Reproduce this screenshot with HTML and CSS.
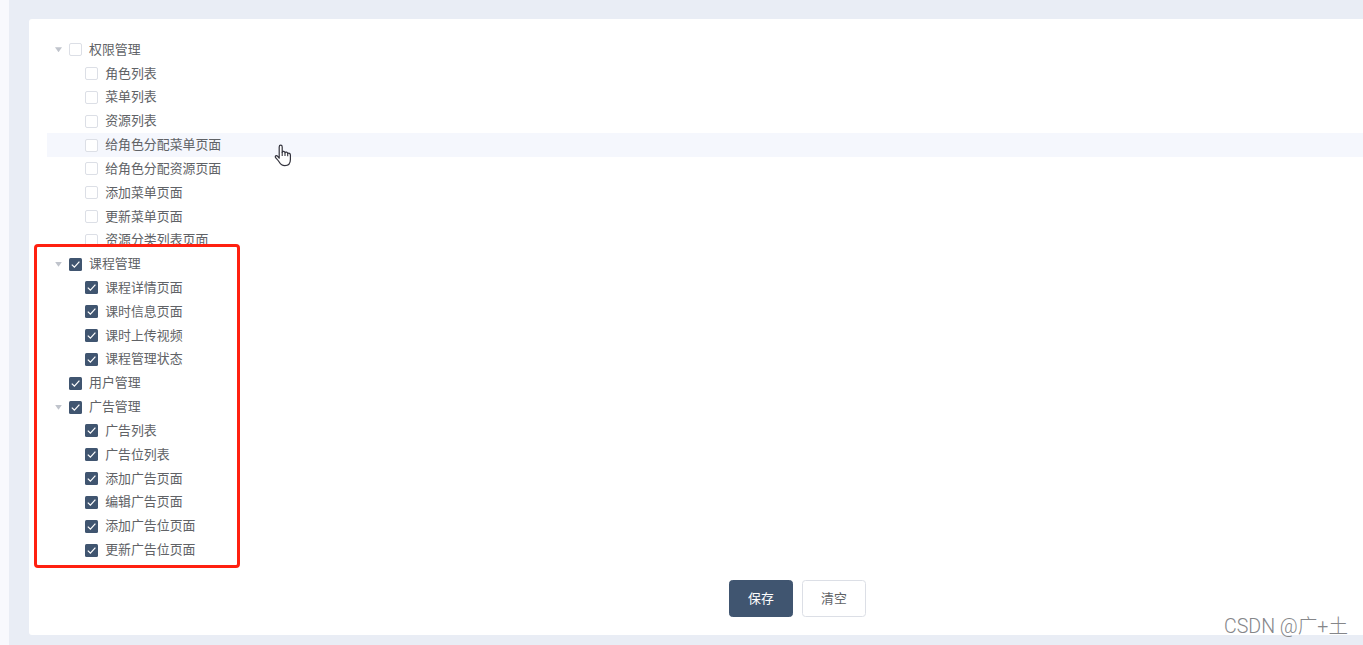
FILE: index.html
```
<!DOCTYPE html>
<html lang="zh-CN">
<head>
    <meta charset="UTF-8">
    <meta name="viewport" content="width=device-width, initial-scale=1.0">
    <title>分配菜单</title>
    <link rel="stylesheet" href="styles.css">
</head>
<body>
    <svg class="sprite">
        <symbol id="check" viewBox="0 0 13 13">
            <path d="M2.8 6.6 L5.4 9.2 L10.4 3.7" fill="none" stroke="#fff" stroke-width="1.2"/>
        </symbol>
    </svg>
    <aside class="sidebar"></aside>
    <main class="main">
        <section class="card">
            <ul class="tree">
                <li class="node"><i class="arrow"></i><span class="checkbox"></span><span class="label">权限管理</span></li>
                <li class="node child"><span class="checkbox"></span><span class="label">角色列表</span></li>
                <li class="node child"><span class="checkbox"></span><span class="label">菜单列表</span></li>
                <li class="node child"><span class="checkbox"></span><span class="label">资源列表</span></li>
                <li class="node child hover"><span class="checkbox"></span><span class="label">给角色分配菜单页面</span></li>
                <li class="node child"><span class="checkbox"></span><span class="label">给角色分配资源页面</span></li>
                <li class="node child"><span class="checkbox"></span><span class="label">添加菜单页面</span></li>
                <li class="node child"><span class="checkbox"></span><span class="label">更新菜单页面</span></li>
                <li class="node child"><span class="checkbox"></span><span class="label">资源分类列表页面</span></li>
                <li class="node"><i class="arrow"></i><span class="checkbox checked"><svg><use href="#check"/></svg></span><span class="label">课程管理</span></li>
                <li class="node child"><span class="checkbox checked"><svg><use href="#check"/></svg></span><span class="label">课程详情页面</span></li>
                <li class="node child"><span class="checkbox checked"><svg><use href="#check"/></svg></span><span class="label">课时信息页面</span></li>
                <li class="node child"><span class="checkbox checked"><svg><use href="#check"/></svg></span><span class="label">课时上传视频</span></li>
                <li class="node child"><span class="checkbox checked"><svg><use href="#check"/></svg></span><span class="label">课程管理状态</span></li>
                <li class="node"><i class="arrow leaf"></i><span class="checkbox checked"><svg><use href="#check"/></svg></span><span class="label">用户管理</span></li>
                <li class="node"><i class="arrow"></i><span class="checkbox checked"><svg><use href="#check"/></svg></span><span class="label">广告管理</span></li>
                <li class="node child"><span class="checkbox checked"><svg><use href="#check"/></svg></span><span class="label">广告列表</span></li>
                <li class="node child"><span class="checkbox checked"><svg><use href="#check"/></svg></span><span class="label">广告位列表</span></li>
                <li class="node child"><span class="checkbox checked"><svg><use href="#check"/></svg></span><span class="label">添加广告页面</span></li>
                <li class="node child"><span class="checkbox checked"><svg><use href="#check"/></svg></span><span class="label">编辑广告页面</span></li>
                <li class="node child"><span class="checkbox checked"><svg><use href="#check"/></svg></span><span class="label">添加广告位页面</span></li>
                <li class="node child"><span class="checkbox checked"><svg><use href="#check"/></svg></span><span class="label">更新广告位页面</span></li>
            </ul>
            <div class="actions">
                <button class="btn primary">保存</button>
                <button class="btn">清空</button>
            </div>
        </section>
    </main>
    <div class="highlight"></div>
    <svg class="cursor" viewBox="0 0 18 23">
        <path d="M5.2 14.2 V3 C5.2 .6 8.2 .6 8.2 3 V8.3 C8.6 6.8 11 7 11 8.8 C11.5 7.6 13.7 8 13.7 9.6 C14.6 8.8 16.4 9.4 16.4 11 V15.5 C16.4 19.5 14.3 21.6 10.8 21.6 C7.8 21.6 6.6 20.4 5.2 18 C4.2 16.2 2.8 15 1.6 13.7 C.5 12 2.5 11 3.7 12.3 Z" fill="#fff" stroke="#33333d" stroke-width="1.2" stroke-linejoin="round"/>
        <path d="M8.2 8 V12 M11 8.8 V12 M13.7 9.6 V12.3" fill="none" stroke="#33333d" stroke-width="1.1"/>
    </svg>
    <div class="watermark">CSDN @广+土</div>
</body>
</html>
```
FILE: styles.css
```
* {
    box-sizing: border-box;
}
body {
    margin: 0;
    height: 645px;
    display: flex;
    overflow: hidden;
    background: #e9edf5;
    font-family: "Liberation Sans", "Noto Sans CJK SC", sans-serif;
    font-size: 12.9px;
    color: #606266;
}
.sprite {
    display: none;
}
.sidebar {
    width: 9px;
    flex-shrink: 0;
    background: #f8f9fd;
}
.main {
    flex: 1;
    padding: 19px 0 10px 20px;
}
.card {
    height: 616px;
    padding: 18.8px 0 0 18px;
    background: #fff;
    border-radius: 3px 0 0 3px;
}
.tree {
    list-style: none;
    margin: 0;
    padding: 0;
}
.node {
    display: flex;
    align-items: center;
    height: 23.84px;
    padding-left: 8px;
}
.node.child {
    padding-left: 38.2px;
}
.node.hover {
    background: #f5f7fd;
}
.arrow {
    width: 7px;
    height: 5px;
    margin-right: 7px;
    background: #c0c4cc;
    clip-path: polygon(0 0, 100% 0, 50% 100%);
}
.arrow.leaf {
    visibility: hidden;
}
.checkbox {
    width: 13px;
    height: 13px;
    margin-right: 7px;
    flex-shrink: 0;
    border: 1px solid #dcdfe6;
    border-radius: 2px;
    background: #fff;
}
.checkbox.checked {
    border: 0;
    border-radius: 1.5px;
    background: #405570;
}
.checkbox svg {
    display: block;
    width: 13px;
    height: 13px;
}
.label {
    line-height: 20px;
    white-space: nowrap;
}
.actions {
    display: flex;
    gap: 9px;
    padding: 18px 0 0 682px;
}
.btn {
    width: 64px;
    height: 37px;
    padding: 0 0 2px;
    border: 1px solid #dcdfe6;
    border-radius: 3.5px;
    background: #fff;
    color: #606266;
    font-family: inherit;
    font-size: 12.9px;
}
.btn.primary {
    border-color: #405570;
    background: #405570;
    color: #fff;
}
/* overlays */
.highlight {
    position: absolute;
    left: 34px;
    top: 244px;
    width: 206px;
    height: 324px;
    border: 3px solid #ff2010;
    border-radius: 4px;
}
.cursor {
    position: absolute;
    left: 274px;
    top: 144px;
    width: 18px;
    height: 23px;
}
.watermark {
    position: absolute;
    right: 15px;
    bottom: 4px;
    line-height: 28px;
    font-family: Roboto, "Noto Sans CJK SC", sans-serif;
    font-size: 19.6px;
    font-weight: 300;
    color: #858689;
}
```
